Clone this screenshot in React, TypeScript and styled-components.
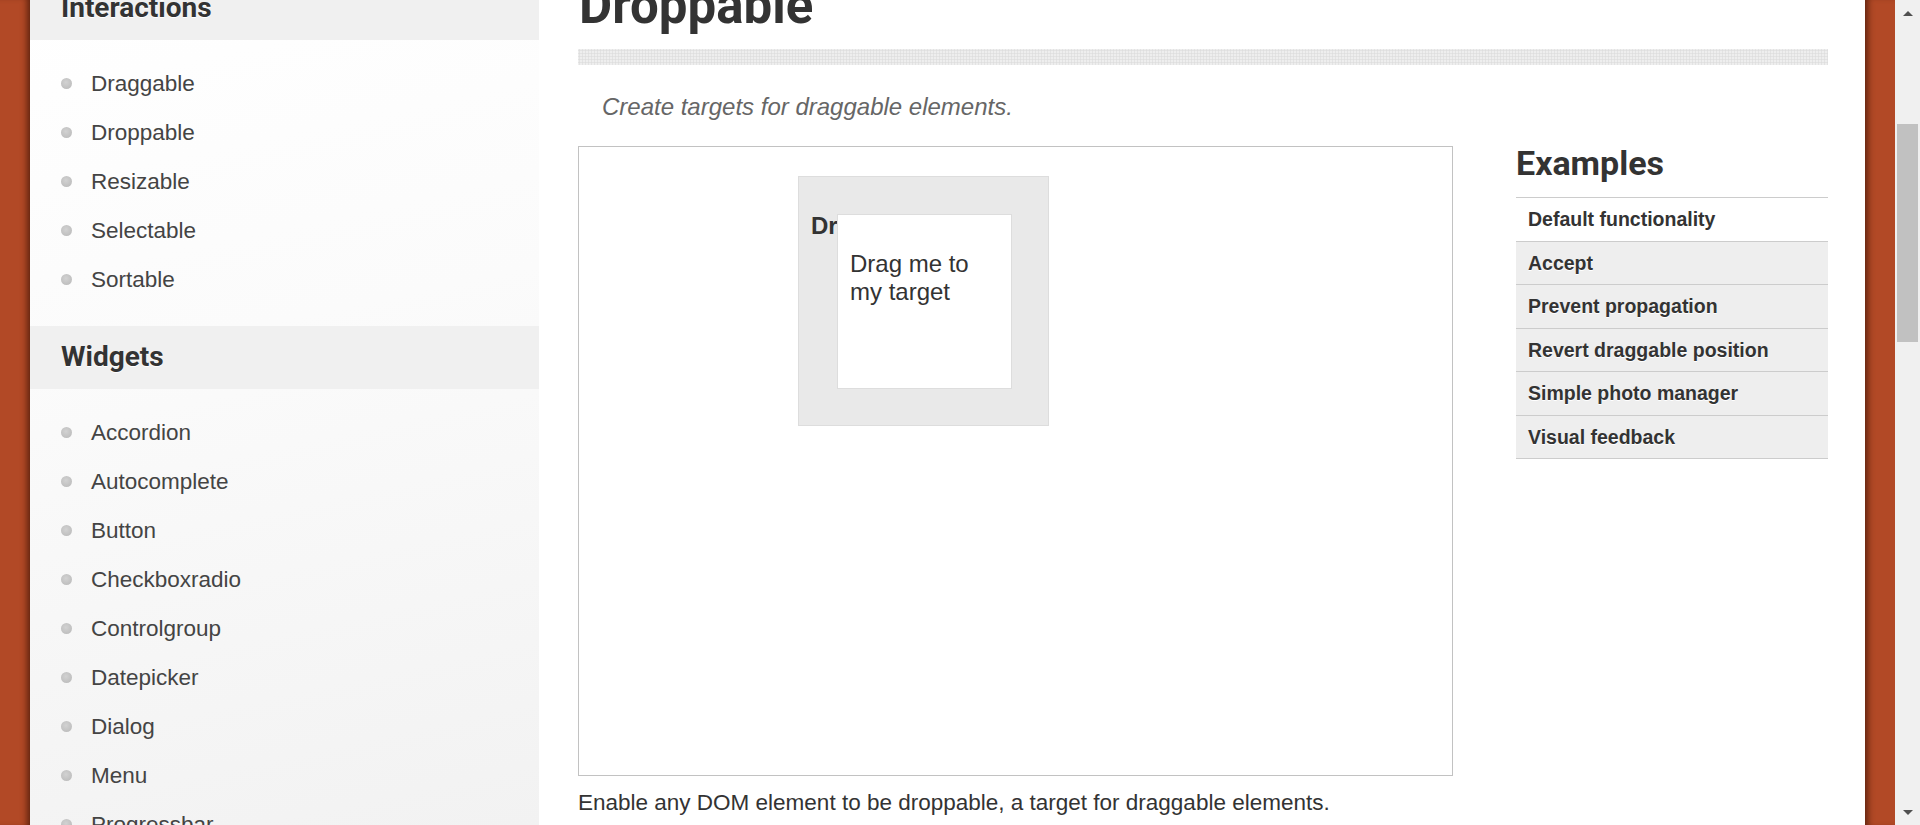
import React from "react";
import styled, { createGlobalStyle } from "styled-components";

const GlobalStyle = createGlobalStyle`
  html, body {
    margin: 0;
    padding: 0;
    height: 100%;
    overflow: hidden;
    background: #b24926;
  }
  #root { height: 100%; }
  *, *::before, *::after { box-sizing: border-box; }
`;

const Page = styled.div`
  display: flex;
  width: 1920px;
  height: 825px;
  overflow: hidden;
  font-family: "Liberation Sans", Arial, sans-serif;
`;

const Stripe = styled.div<{ $side: "left" | "right" }>`
  flex: 0 0 30px;
  background: #b24926;
  box-shadow: ${(p) =>
    p.$side === "left"
      ? "inset -7px 0 6px -4px rgba(50, 15, 3, 0.65)"
      : "inset 7px 0 6px -4px rgba(50, 15, 3, 0.65)"};
`;

const Sidebar = styled.nav`
  flex: 0 0 509px;
  overflow: hidden;
  background: linear-gradient(168deg, #ffffff 0%, #fbfbfb 40%, #f2f2f2 100%);
`;

const SidebarInner = styled.div`
  margin-top: -23px;
`;

const GroupTitle = styled.h3`
  margin: 0;
  height: 63px;
  line-height: 61px;
  padding-left: 31px;
  background: #f0f0f0;
  font-family: Roboto, "Liberation Sans", sans-serif;
  font-weight: 700;
  font-size: 28px;
  color: #333;
  text-shadow: 0 1px 0 #fff;
`;

const NavList = styled.ul`
  list-style: none;
  margin: 0;
  padding: 19px 0 22px 31px;
`;

const NavItem = styled.li`
  display: flex;
  align-items: center;
  gap: 19px;
  height: 49px;
  font-size: 22.5px;
  color: #444;

  &::before {
    content: "";
    flex: 0 0 11px;
    height: 11px;
    border-radius: 50%;
    background: radial-gradient(circle at 45% 40%, #d2d2d2 0%, #c2c2c2 60%, #b8b8b8 100%);
  }
`;

const Main = styled.main`
  flex: 1;
  background: #fff;
  padding: 0 37px 0 39px;
  overflow: hidden;
`;

const Title = styled.h1`
  margin: -20px 0 0;
  padding-left: 1px;
  height: 51px;
  font-family: Roboto, "Liberation Sans", sans-serif;
  font-weight: 700;
  font-size: 51px;
  line-height: 51px;
  color: #333;
`;

const PatternBar = styled.div`
  height: 16px;
  margin-top: 18px;
  background-color: #eeeeee;
  background-image: radial-gradient(circle, #dedede 0.9px, transparent 1.2px);
  background-size: 3px 3px;
`;

const Lead = styled.p`
  margin: 28px 0 0;
  padding-left: 24px;
  font-style: italic;
  font-size: 24px;
  line-height: 28px;
  color: #666;
`;

const Columns = styled.div`
  display: flex;
  align-items: flex-start;
  gap: 63px;
  margin-top: 25px;
`;

const DemoColumn = styled.div`
  flex: 0 0 875px;
`;

const DemoFrame = styled.div`
  position: relative;
  height: 630px;
  border: 1px solid #c2c2c2;
  padding: 29px 0 0 219px;
  background: #fff;
`;

const DropTarget = styled.div`
  width: 251px;
  height: 250px;
  border: 1px solid #dddddd;
  background: #e9e9e9;
  padding: 12px;
  color: #333;
`;

const DropLabel = styled.p`
  margin: 23px 0 0;
  font-weight: 700;
  font-size: 24px;
  line-height: 28px;
`;

const DragBox = styled.div`
  position: absolute;
  left: 258px;
  top: 67px;
  width: 175px;
  height: 175px;
  border: 1px solid #dddddd;
  background: #fff;
  padding: 12px;
  color: #333;
`;

const DragLabel = styled.p`
  margin: 23px 0 0;
  font-size: 24px;
  line-height: 28px;
`;

const Description = styled.p`
  margin: 10px 0 0;
  font-size: 22.5px;
  line-height: 33.75px;
  color: #333;
`;

const ExamplesColumn = styled.aside`
  flex: 0 0 312px;
`;

const ExamplesTitle = styled.h2`
  margin: -3px 0 0;
  height: 40px;
  font-family: Roboto, "Liberation Sans", sans-serif;
  font-weight: 700;
  font-size: 34px;
  line-height: 40px;
  color: #333;
`;

const ExampleList = styled.ul`
  list-style: none;
  margin: 14px 0 0;
  padding: 0;
  border-top: 1px solid #cccccc;
`;

const ExampleItem = styled.li<{ $active?: boolean }>`
  height: 43.5px;
  line-height: 43.5px;
  padding: 0 12px;
  border-bottom: 1px solid #cccccc;
  background: ${(p) => (p.$active ? "#ffffff" : "#eeeeee")};
  font-weight: 700;
  font-size: 19.5px;
  color: #333;
  text-shadow: 0 1px 0 #fff;
  white-space: nowrap;
`;

const Scrollbar = styled.div`
  flex: 0 0 25px;
  display: flex;
  flex-direction: column;
  background: #f0f0f0;
`;

const ScrollButton = styled.div`
  flex: 0 0 25px;
  display: flex;
  align-items: center;
  justify-content: center;
`;

const Arrow = styled.span<{ $dir: "up" | "down" }>`
  width: 0;
  height: 0;
  border-left: 5.5px solid transparent;
  border-right: 5.5px solid transparent;
  ${(p) =>
    p.$dir === "up"
      ? "border-bottom: 5px solid #505050; margin-top: 1px;"
      : "border-top: 5px solid #505050; margin-bottom: 1px;"}
`;

const ScrollTrack = styled.div`
  flex: 1;
  padding: 99px 2px 0;
`;

const ScrollThumb = styled.div`
  height: 218px;
  background: #c1c1c1;
`;

const interactions = ["Draggable", "Droppable", "Resizable", "Selectable", "Sortable"];
const widgets = [
  "Accordion",
  "Autocomplete",
  "Button",
  "Checkboxradio",
  "Controlgroup",
  "Datepicker",
  "Dialog",
  "Menu",
  "Progressbar",
  "Selectmenu",
];
const examples = [
  "Default functionality",
  "Accept",
  "Prevent propagation",
  "Revert draggable position",
  "Simple photo manager",
  "Visual feedback",
];

export default function App() {
  return (
    <>
      <GlobalStyle />
      <Page>
        <Stripe $side="left" />
        <Sidebar>
          <SidebarInner>
            <GroupTitle>Interactions</GroupTitle>
            <NavList>
              {interactions.map((n) => (
                <NavItem key={n}>{n}</NavItem>
              ))}
            </NavList>
            <GroupTitle>Widgets</GroupTitle>
            <NavList>
              {widgets.map((n) => (
                <NavItem key={n}>{n}</NavItem>
              ))}
            </NavList>
          </SidebarInner>
        </Sidebar>
        <Main>
          <Title>Droppable</Title>
          <PatternBar />
          <Lead>Create targets for draggable elements.</Lead>
          <Columns>
            <DemoColumn>
              <DemoFrame>
                <DropTarget>
                  <DropLabel>Drop here</DropLabel>
                </DropTarget>
                <DragBox>
                  <DragLabel>Drag me to my target</DragLabel>
                </DragBox>
              </DemoFrame>
              <Description>
                Enable any DOM element to be droppable, a target for draggable elements.
              </Description>
            </DemoColumn>
            <ExamplesColumn>
              <ExamplesTitle>Examples</ExamplesTitle>
              <ExampleList>
                {examples.map((e, i) => (
                  <ExampleItem key={e} $active={i === 0}>
                    {e}
                  </ExampleItem>
                ))}
              </ExampleList>
            </ExamplesColumn>
          </Columns>
        </Main>
        <Stripe $side="right" />
        <Scrollbar>
          <ScrollButton>
            <Arrow $dir="up" />
          </ScrollButton>
          <ScrollTrack>
            <ScrollThumb />
          </ScrollTrack>
          <ScrollButton>
            <Arrow $dir="down" />
          </ScrollButton>
        </Scrollbar>
      </Page>
    </>
  );
}
